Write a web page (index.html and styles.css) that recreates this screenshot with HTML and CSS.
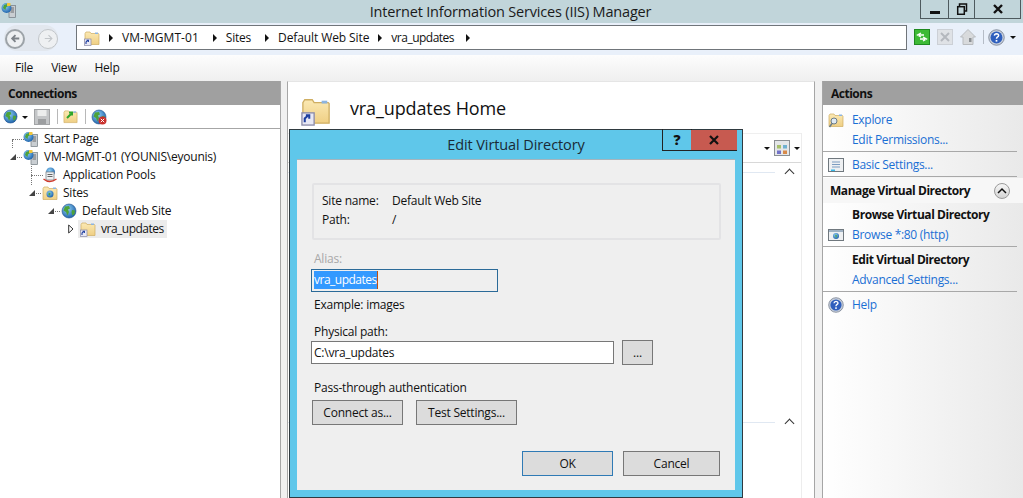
FILE: index.html
```html
<!DOCTYPE html>
<html lang="en">
<head>
<meta charset="utf-8">
<title>Internet Information Services (IIS) Manager</title>
<link rel="stylesheet" href="styles.css">
</head>
<body>
<svg class="defs" width="0" height="0" aria-hidden="true">
  <defs>
    <linearGradient id="fold" x1="0" y1="0" x2="0" y2="1"><stop offset="0" stop-color="#fbe9b4"/><stop offset="1" stop-color="#efcf84"/></linearGradient>
    <radialGradient id="glob" cx=".4" cy=".35" r=".7"><stop offset="0" stop-color="#8fd0f5"/><stop offset="1" stop-color="#1a5ea8"/></radialGradient>
    <symbol id="folder" viewBox="0 0 16 16">
      <path d="M1 3.500 2 2h4l1 1.500h7.500l.5.5v10.500H1z" fill="url(#fold)" stroke="#cfae62" stroke-width=".7"/>
      <path d="M11 2.500h3v1.500h-3z" fill="#8db4e0"/>
    </symbol>
    <symbol id="shortcut" viewBox="0 0 16 16">
      <use href="#folder"/>
      <rect x=".5" y="9" width="6.500" height="6.500" fill="#e8e8f4" stroke="#8a8aa8" stroke-width=".7"/>
      <path d="M2 14v-2l1.500-1.300M2.600 10.300h1.800v1.800" fill="none" stroke="#1f3f9f" stroke-width="1.100"/>
    </symbol>
    <symbol id="globe" viewBox="0 0 16 16">
      <circle cx="8" cy="8" r="7" fill="url(#glob)" stroke="#1c4f8c" stroke-width=".6"/>
      <path d="M4 3.500 8 3l1 2.500-2 1 1 2.500-1.500 3.500L5 9 2.500 7.500zM11 7l3 .5-.5 3.500-2 1.500-1-3z" fill="#4da33a"/>
    </symbol>
    <symbol id="server" viewBox="0 0 16 16">
      <rect x="8" y="3.500" width="6.500" height="12" fill="#c9ced2" stroke="#6f7a80" stroke-width=".7"/>
      <path d="M9.500 6h3.500M9.500 8h3.500M9.500 10h3.500" stroke="#555" stroke-width=".8"/>
      <circle cx="5.500" cy="6" r="5" fill="url(#glob)"/>
      <path d="M3 3 6 2l1 2-2 1.500-.5 2.500L2 6z" fill="#4da33a"/>
      <path d="M6 1h3.500v3H6z" fill="#f2c63a"/>
    </symbol>
    <symbol id="pools" viewBox="0 0 16 16">
      <circle cx="8.500" cy="5" r="4.500" fill="url(#glob)"/>
      <rect x="4" y="5" width="8" height="8" fill="#eef0f2" stroke="#7d868c" stroke-width=".8"/>
      <path d="M5.500 7.500h5M5.500 9.500h5" stroke="#666"/>
      <path d="M1.500 12q6 5 13 0" fill="none" stroke="#d0392b" stroke-width="1.300"/>
    </symbol>
    <symbol id="sites" viewBox="0 0 16 16">
      <use href="#folder"/>
      <circle cx="8" cy="9" r="3.500" fill="url(#glob)"/>
      <path d="M6.500 7.500 8.500 8 8 10.500 6.500 10z" fill="#4da33a"/>
    </symbol>
    <symbol id="help" viewBox="0 0 16 16">
      <circle cx="8" cy="8" r="7.300" fill="#c8d0dc" stroke="#6c7686" stroke-width=".7"/>
      <circle cx="8" cy="8" r="5.600" fill="#2f5fbd"/>
      <path d="M6 6.300Q6.200 4.400 8 4.400 10 4.500 10 6q0 1-1.200 1.700-.8.500-.8 1.500" fill="none" stroke="#fff" stroke-width="1.400"/>
      <rect x="7.200" y="10.300" width="1.600" height="1.600" fill="#fff"/>
    </symbol>
    <symbol id="arrow-left" viewBox="0 0 20 20"><path d="M15 10H6M10 5.500 5.500 10l4.500 4.500" fill="none" stroke="currentColor" stroke-width="2.400"/></symbol>
    <symbol id="arrow-right" viewBox="0 0 20 20"><path d="M5 10h9M10 5.500l4.500 4.500-4.500 4.500" fill="none" stroke="currentColor" stroke-width="1.500"/></symbol>
  </defs>
</svg>

<header class="titlebar">
  <svg class="title-icon"><use href="#server"/></svg>
  <span class="title-text">Internet Information Services (IIS) Manager</span>
  <div class="winbtns">
    <span class="winbtn min"><svg width="12" height="12"><rect x="1" y="8" width="10" height="3" fill="#111"/></svg></span>
    <span class="winbtn max"><svg width="12" height="12"><path d="M3.500 3V1h7v7H8.500" fill="none" stroke="#111" stroke-width="1.500"/><rect x="1.700" y="3.700" width="6.600" height="7.600" fill="none" stroke="#111" stroke-width="1.500"/></svg></span>
    <span class="winbtn close"><svg width="12" height="12"><path d="M2 2l8 8M10 2l-8 8" stroke="#111" stroke-width="2.400"/></svg></span>
  </div>
</header>

<nav class="navbar">
  <div class="navpill">
    <span class="navcircle back"><svg width="20" height="20"><use href="#arrow-left"/></svg></span>
    <span class="navcircle fwd"><svg width="20" height="20"><use href="#arrow-right"/></svg></span>
  </div>
  <div class="address">
    <svg class="addr-folder"><use href="#shortcut"/></svg>
    <span class="crumb c-server">VM-MGMT-01</span>
    <span class="crumb">Sites</span>
    <span class="crumb c-site">Default Web Site</span>
    <span class="crumb c-dir">vra_updates</span>
    <span class="crumb last"></span>
  </div>
  <div class="navtools">
    <svg width="16" height="16" class="nt-green"><rect x=".5" y=".5" width="15" height="15" fill="#3dba36" stroke="#1f8a20"/><path d="M7 4 3.500 6 7 8M5 6h5M9 8l3.500 2L9 12M11 10H6" fill="none" stroke="#fff" stroke-width="1.300"/></svg>
    <svg width="16" height="16" class="nt-stop"><rect x=".5" y=".5" width="15" height="15" fill="#dfe2e6" stroke="#ccd0d6"/><path d="M4 4l8 8M12 4l-8 8" stroke="#b4b8be" stroke-width="2"/></svg>
    <svg width="16" height="16" class="nt-home"><path d="M8 .5 .5 8H3v7.500h10V8h2.500z" fill="#d8dadc" stroke="#b8bbbe"/><rect x="9" y="9" width="2.500" height="4" fill="#8c9094"/></svg>
    <span class="nt-sep"></span>
    <svg width="16" height="16" class="nt-help"><use href="#help"/></svg>
    <span class="caret"></span>
  </div>
</nav>

<div class="menubar">
  <span class="menu-item">File</span>
  <span class="menu-item">View</span>
  <span class="menu-item">Help</span>
</div>

<main class="panes">
  <section class="pane conn">
    <h2 class="pane-head">Connections</h2>
    <div class="conn-tools">
      <svg width="15" height="15"><use href="#globe"/></svg>
      <span class="caret small"></span>
      <svg class="t-save" width="16" height="16"><rect x=".5" y=".5" width="15" height="15" fill="#c4c6c8" stroke="#a2a4a6"/><rect x="3.500" y="1" width="9" height="6" fill="#eceded"/><rect x="4" y="10" width="8" height="5" fill="#9c9ea0"/></svg>
      <span class="t-sep"></span>
      <svg width="15" height="15"><use href="#folder"/><path d="M4 9 8 5M6 3.500h3v3" fill="none" stroke="#2ea52a" stroke-width="2"/></svg>
      <span class="t-sep"></span>
      <svg width="16" height="16"><use href="#globe"/><circle cx="11.500" cy="11.500" r="4" fill="#c9302c"/><path d="M9.800 9.800l3.400 3.400M13.200 9.800l-3.400 3.400" stroke="#fff"/></svg>
    </div>
    <ul class="tree">
      <li class="row lvl0"><span class="stem stem-down"></span><svg class="ico"><use href="#server"/></svg><span class="lbl">Start Page</span></li>
      <li class="row lvl0"><span class="exp open"></span><span class="dash"></span><svg class="ico"><use href="#server"/></svg><span class="lbl">VM-MGMT-01 (YOUNIS\eyounis)</span></li>
      <li class="row lvl1"><span class="stem stem-both"></span><svg class="ico"><use href="#pools"/></svg><span class="lbl">Application Pools</span></li>
      <li class="row lvl1"><span class="exp open"></span><span class="dash"></span><svg class="ico"><use href="#sites"/></svg><span class="lbl">Sites</span></li>
      <li class="row lvl2"><span class="exp open"></span><span class="dash"></span><svg class="ico"><use href="#globe"/></svg><span class="lbl">Default Web Site</span></li>
      <li class="row lvl3"><svg class="exp-closed" width="6" height="10"><path d="M.7 1 5 5 .7 9z" fill="#fff" stroke="#333"/></svg><span class="sel"><svg class="ico"><use href="#shortcut"/></svg><span class="lbl dir-name">vra_updates</span></span></li>
    </ul>
  </section>

  <section class="pane center">
    <div class="center-head">
      <svg class="home-folder"><use href="#shortcut"/></svg>
      <h1 class="home-title">vra_updates Home</h1>
    </div>
    <div class="center-body">
      <div class="center-inner">
        <div class="strip">
          <span class="caret"></span>
          <svg width="16" height="16"><rect x=".5" y=".5" width="15" height="15" fill="#e4e6e8" stroke="#8a8e92"/><rect x="3" y="5" width="4" height="3.500" fill="#a6c06a"/><rect x="9" y="5" width="4" height="3.500" fill="#6fb0d0"/><rect x="3" y="10.500" width="4" height="3.500" fill="#7272c8"/><rect x="9" y="10.500" width="4" height="3.500" fill="#d88a4a"/></svg>
          <span class="caret"></span>
        </div>
        <div class="section-line first"><span class="chev"></span></div>
        <div class="section-line second"><span class="chev"></span></div>
      </div>
    </div>
  </section>

  <aside class="pane actions">
    <h2 class="pane-head">Actions</h2>
    <div class="act-body">
      <div class="act-group">
        <a class="act"><svg class="ico"><use href="#folder"/><circle cx="6" cy="9" r="3" fill="#dfeaf4" stroke="#6b7c88"/><path d="M4 11.500 1.500 15" stroke="#6b7c88" stroke-width="1.500"/></svg>Explore</a>
        <a class="act">Edit Permissions...</a>
      </div>
      <div class="act-group">
        <a class="act"><svg class="ico"><rect x=".5" y="1.500" width="15" height="13" fill="#eef0f2" stroke="#70787e"/><path d="M4 5h8M4 7.500h8M4 10h8" stroke="#7c9cc0"/><rect x="3" y="12.500" width="4" height="1.500" fill="#38b8e8"/></svg>Basic Settings...</a>
      </div>
      <div class="manage">
        <span>Manage Virtual Directory</span>
        <span class="collapse"><svg width="10" height="8"><path d="M1 6l4-4 4 4" fill="none" stroke="#111" stroke-width="1.500"/></svg></span>
      </div>
      <div class="act-group after-manage">
        <div class="act-title">Browse Virtual Directory</div>
        <a class="act"><svg class="ico"><rect x=".5" y="2.500" width="15" height="11" fill="#eef0f2" stroke="#70787e"/><rect x="1" y="3" width="14" height="2" fill="#9fb2c4"/><circle cx="8" cy="9" r="3" fill="url(#glob)"/><path d="M7 7.500 9 8.500 8 11z" fill="#4da33a"/></svg>Browse *:80 (http)</a>
      </div>
      <div class="act-group">
        <div class="act-title">Edit Virtual Directory</div>
        <a class="act">Advanced Settings...</a>
      </div>
      <div class="act-group last">
        <a class="act"><svg class="ico"><use href="#help"/></svg>Help</a>
      </div>
    </div>
  </aside>
</main>

<div class="dialog" role="dialog">
  <div class="dlg-title">
    <span class="dlg-name">Edit Virtual Directory</span>
    <span class="dlg-help">?</span>
    <span class="dlg-close"><svg width="12" height="10"><path d="M2 1l8 8M10 1 2 9" stroke="#111" stroke-width="2.200"/></svg></span>
  </div>
  <div class="dlg-body">
    <div class="group">
      <div class="g-row"><span class="g-key">Site name:</span><span>Default Web Site</span></div>
      <div class="g-row"><span class="g-key">Path:</span><span>/</span></div>
    </div>
    <div class="f-label alias">Alias:</div>
    <div class="input alias-input"><span class="selected">vra_updates</span></div>
    <div class="f-label example">Example: images</div>
    <div class="f-label phys">Physical path:</div>
    <div class="path-row">
      <div class="input path-input">C:\vra_updates</div>
      <span class="btn dots">...</span>
    </div>
    <div class="f-label pass">Pass-through authentication</div>
    <div class="btn-row">
      <span class="btn connect">Connect as...</span>
      <span class="btn test">Test Settings...</span>
    </div>
    <div class="foot">
      <span class="btn ok">OK</span>
      <span class="btn cancel">Cancel</span>
    </div>
  </div>
</div>
</body>
</html>
```
FILE: styles.css
```css
* { box-sizing: border-box; }
html, body { margin: 0; padding: 0; }
body {
  width: 1023px; height: 498px; overflow: hidden; position: relative;
  display: flex; flex-direction: column;
  font: 12px/18px "Open Sans", "Noto Sans", sans-serif;
  letter-spacing: -0.22px;
  color: #111; background: #f0f0f0;
}
.defs { position: absolute; }
svg { display: block; flex: none; }

.titlebar { height: 23px; background: #c1d5da; display: flex; align-items: flex-start; position: relative; flex: none; }
.title-icon { width: 16px; height: 16px; margin: 2px 0 0 1px; }
.title-text { position: absolute; left: 0; width: 1021px; text-align: center; font-size: 14.500px; line-height: 24px; letter-spacing: -0.18px; color: #1a1a1a; }
.winbtns { margin-left: auto; margin-right: 2px; display: flex; height: 19px; border: 1px solid #4e5a5e; border-top: 0; position: relative; }
.winbtn { display: flex; align-items: center; justify-content: center; height: 18px; }
.winbtn + .winbtn { border-left: 1px solid #4e5a5e; }
.min { width: 27px; } .max { width: 26px; } .close { width: 46px; }

.navbar { height: 32px; flex: none; background: #e9f0fa; display: flex; align-items: flex-start; }
.navpill { width: 54px; height: 26px; margin: 2px 0 0 4px; display: flex; align-items: center; background: #e2e7ee; border-radius: 13px; flex: none; }
.navcircle { width: 20px; height: 20px; border-radius: 50%; display: flex; align-items: center; justify-content: center; border: 2px solid #9da3a8; color: #7d8288; background: #eef0f2; margin-top: 1px; }
.navcircle svg { width: 15px; height: 15px; }
.back { margin-left: 1px; }
.fwd { border-width: 1px; border-color: #c2c6ca; color: #c2c6ca; margin-left: 13px; }
.address { width: 831px; height: 25px; margin: 2px 0 0 18px; background: #fff; border: 1px solid #70757a; display: flex; align-items: center; padding-left: 7px; flex: none; }
.addr-folder { width: 16px; height: 16px; margin-right: 4px; }
.crumb { display: inline-flex; align-items: center; white-space: nowrap; margin-right: 9px; }
.crumb::before { content: ""; border-left: 4px solid #111; border-top: 4px solid transparent; border-bottom: 4px solid transparent; margin: 0 9px 0 5px; }
.c-server { letter-spacing: 0.05px; }
.c-site { letter-spacing: -0.1px; margin-right: 4px; }
.c-dir, .dir-name { letter-spacing: -0.5px; }
.c-dir { margin-right: 7px; }
.navtools { display: flex; align-items: center; height: 16px; margin: 6px 0 0 7px; }
.nt-stop { margin-left: 7px; } .nt-home { margin-left: 7px; }
.nt-sep { width: 1px; height: 14px; background: #b5bcc6; margin-left: 7px; }
.nt-help { margin-left: 4px; width: 17px; height: 17px; }
.caret { display: block; flex: none; width: 0; height: 0; border-top: 3px solid #111; border-left: 3px solid transparent; border-right: 3px solid transparent; }
.navtools .caret { margin-left: 5px; }

.menubar { height: 26px; flex: none; background: linear-gradient(#fdfdfd, #efefef); display: flex; padding-left: 15px; gap: 18px; align-items: center; }
.menu-item { line-height: 26px; }

.panes { flex: 1; min-height: 0; display: grid; grid-template-columns: 281px 534px 208px; align-items: stretch; }
.pane { min-width: 0; display: flex; flex-direction: column; }
.pane-head { margin: 0; height: 24px; flex: none; background: #a0a0a0; font-size: 12px; font-weight: 700; line-height: 25px; padding-left: 8px; color: #111; letter-spacing: -0.5px; }

.conn { background: #fff; border-right: 1px solid #a6a6a6; }
.conn-tools { height: 24px; flex: none; display: flex; align-items: center; padding-left: 3px; border-bottom: 1px solid #a6a6a6; }
.conn-tools .caret.small { margin: 2px 6px 0 4px; }
.t-sep { width: 1px; height: 15px; background: #b8b8b8; margin: 0 5px 0 7px; }
.tree { list-style: none; margin: 1px 0 0; padding: 0; }
.row { height: 18px; display: flex; align-items: center; white-space: nowrap; }
.ico { width: 16px; height: 16px; }
.lvl0 { padding-left: 9px; } .lvl1 { padding-left: 28px; } .lvl2 { padding-left: 47px; } .lvl3 { padding-left: 68px; }
.row .lbl { margin-left: 5px; }
.exp.open { width: 0; height: 0; flex: none; border-bottom: 6px solid #444; border-left: 6px solid transparent; margin-left: 1px; }
.exp-closed { margin-right: 3px; }
.stem { width: 12px; height: 1px; border-top: 1px dotted #777; flex: none; margin-left: 3px; margin-right: -1px; position: relative; }
.stem::before { content: ""; position: absolute; left: 0; width: 1px; border-left: 1px dotted #777; }
.stem-down::before { top: 0; height: 8px; }
.stem-both::before { top: -10px; height: 19px; }
.dash { width: 5px; height: 1px; border-top: 1px dotted #777; flex: none; margin: 0 1px; }
.sel { display: flex; align-items: center; height: 18px; background: #ececec; padding: 0 4px 0 2px; margin-left: 1px; width: 89px; }

.center { background: #f0f0f0; padding-left: 6px; }
.center-head, .center-body { background: #fff; border-left: 1px solid #a6a6a6; border-right: 1px solid #a6a6a6; }
.center-head { height: 48px; flex: none; display: flex; align-items: flex-start; padding-left: 13px; border-top: 1px solid #e5e5e5; }
.home-folder { width: 30px; height: 30px; margin-top: 14px; }
.home-title { margin: 13px 0 0 19px; font-size: 18px; font-weight: 400; line-height: 26px; letter-spacing: -0.12px; }
.center-body { flex: 1; padding-right: 12px; display: flex; flex-direction: column; }
.center-inner { flex: 1; border-right: 1px solid #ededed; margin-top: 4px; }
.strip { height: 30px; display: flex; justify-content: flex-end; align-items: center; gap: 4px; border-bottom: 1px solid #d8d8d8; padding-right: 1px; border-top: 1px solid #efefef; }
.section-line { position: relative; height: 1px; background: #e0e8f2; margin-right: 26px; }
.section-line.first { margin-top: 9px; }
.section-line.second { margin-top: 249px; }
.chev { position: absolute; right: -18px; top: -2px; width: 7px; height: 7px; border-left: 1.500px solid #333; border-top: 1.500px solid #333; transform: rotate(45deg); }

.actions { background: #f0f0f0; border-left: 1px solid #a6a6a6; margin-left: 7px; }
.act-body { flex: 1; background: linear-gradient(to right, #fff, #e9e9e9 100%); padding-top: 2px; }
.act-group { padding: 3px 8px 1px 0; margin-right: 6px; border-bottom: 1px solid #a8a8a8; }
.act-group.last { border: 0; }
.act-group.after-manage { padding-top: 2px; }
.act { display: flex; align-items: center; height: 20px; padding-left: 29px; position: relative; color: #1a6fd4; white-space: nowrap; letter-spacing: -0.3px; }
.act .ico { position: absolute; left: 5px; top: 2px; }
.act-title { font-weight: 700; height: 20px; padding-left: 29px; line-height: 20px; white-space: nowrap; color: #111; letter-spacing: -0.42px; }
.manage { height: 25px; margin-top: 1px; padding-top: 1px; background: #f7f7f7; display: flex; align-items: center; font-weight: 700; padding-left: 7px; letter-spacing: -0.45px; padding-right: 13px; justify-content: space-between; }
.collapse { width: 16px; height: 16px; border: 1px solid #9a9a9a; border-radius: 50%; background: linear-gradient(#f6f6f6, #d4d4d4); display: flex; align-items: center; justify-content: center; }

.dialog { position: absolute; left: 289px; top: 129px; width: 454px; height: 369px; background: #5fc7ea; border: 1px solid #2f3a40; padding: 0 7px 7px 7px; display: flex; flex-direction: column; }
.dlg-title { height: 29px; flex: none; position: relative; text-align: center; }
.dlg-name { font-size: 14.500px; line-height: 30px; color: #1a2a36; letter-spacing: -0.1px; display: block; }
.dlg-help { position: absolute; left: 365px; top: -1px; width: 30px; height: 22px; border: 1px solid #222; border-top: 0; font-weight: 800; font-size: 14px; line-height: 21px; text-align: center; }
.dlg-close { position: absolute; left: 394px; top: 0; width: 46px; height: 21px; background: #c75a50; border-bottom: 1px solid #222; display: flex; align-items: center; justify-content: center; }
.dlg-body { flex: 1; min-height: 0; background: #efefef; border-top: 1px solid #a6b4bc; padding: 23px 14px 0; display: flex; flex-direction: column; align-items: flex-start; }

.group { width: 409px; height: 57px; margin-left: 1px; border: 2px solid #e3e3e5; border-radius: 2px; padding: 6px 0 0 8px; }
.g-row { display: flex; height: 19px; line-height: 19px; }
.g-key { width: 70px; }
.f-label { margin-left: 3px; height: 18px; white-space: nowrap; }
.alias { margin-top: 10px; color: #a8a8a8; }
.input { background: #fff; border: 1px solid #777; height: 23px; line-height: 21px; padding-left: 2px; white-space: nowrap; }
.alias-input { width: 187px; margin-top: 1px; background: #efefef; border-color: #2b6a98; padding-top: 1px; line-height: 18px; }
.selected { display: inline-block; background: #3399ff; color: #fff; height: 18px; width: 64px; border-right: 1px solid #c05010; letter-spacing: -0.5px; }
.example { margin-top: 4px; }
.phys { margin-top: 9px; }
.path-row { display: flex; align-items: center; margin-top: -1px; }
.path-input { width: 303px; }
.btn { background: #dcdcdc; border: 1px solid #777; display: flex; align-items: center; justify-content: center; height: 25px; white-space: nowrap; }
.dots { width: 31px; margin-left: 8px; }
.pass { margin-top: 14px; }
.btn-row { display: flex; gap: 13px; margin-top: 3px; margin-left: 1px; }
.connect { width: 91px; } .test { width: 101px; }
.foot { display: flex; gap: 10px; align-self: flex-end; margin: 26px 1px 0 0; }
.ok { width: 91px; border-color: #2f7ab5; }
.cancel { width: 97px; }
```
